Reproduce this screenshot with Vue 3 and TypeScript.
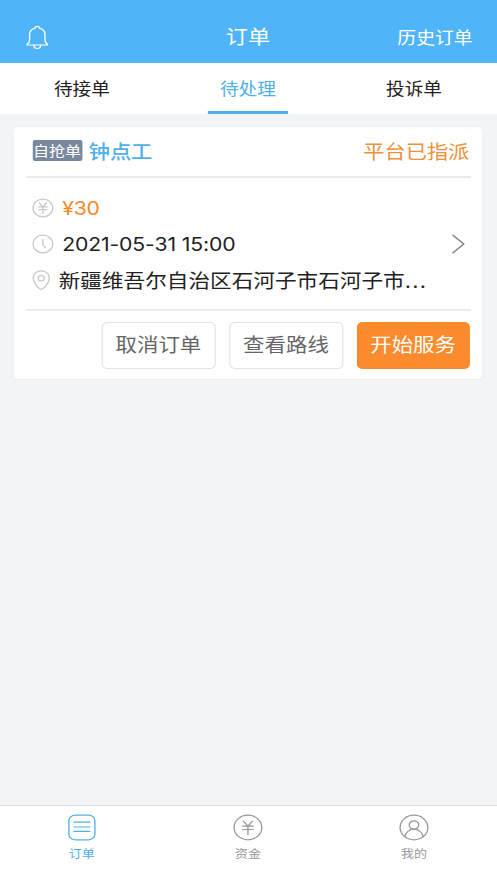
<script setup lang="ts">
import { ref } from 'vue'

interface Tab {
  key: string
  label: string
}

const tabs: Tab[] = [
  { key: 'waiting', label: '待接单' },
  { key: 'pending', label: '待处理' },
  { key: 'complaint', label: '投诉单' },
]
const navItems: Tab[] = [
  { key: 'orders', label: '订单' },
  { key: 'funds', label: '资金' },
  { key: 'mine', label: '我的' },
]
const activeTab = ref('pending')
const activeNav = ref('orders')

const order = {
  tag: '自抢单',
  service: '钟点工',
  status: '平台已指派',
  price: '¥30',
  time: '2021-05-31 15:00',
  address: '新疆维吾尔自治区石河子市石河子市',
}
</script>

<template>
  <div class="app">
    <header class="header">
      <svg class="bell" width="20" height="25" viewBox="0 0 20 25">
        <path d="M.9 19.200c1.600-1.200 2.300-2.300 2.300-4.200V9.600c0-3.400 2.100-5.700 5-6.500 0-1.100.7-1.800 1.800-1.800s1.800.7 1.800 1.800c2.900.8 5 3.100 5 6.500V15c0 1.900.7 3 2.300 4.200v.8H.9z" />
        <path d="M6.900 20.200c.2 2.100 1.400 3.300 3.100 3.300s2.900-1.200 3.100-3.300" />
      </svg>
      <h1 class="title">订单</h1>
      <span class="history">历史订单</span>
    </header>

    <nav class="tabs">
      <div
        v-for="t in tabs"
        :key="t.key"
        class="tab"
        :class="{ active: t.key === activeTab }"
        @click="activeTab = t.key"
      >
        <span class="tab-label">{{ t.label }}</span>
      </div>
    </nav>

    <main class="content">
      <section class="card">
        <div class="card-head">
          <span class="tag">{{ order.tag }}</span>
          <span class="service">{{ order.service }}</span>
          <span class="status">{{ order.status }}</span>
        </div>
        <div class="card-body">
          <div class="details">
            <div class="row price">
              <svg class="icon" width="20" height="20" viewBox="0 0 20 20">
                <circle cx="10" cy="10" r="8.800" />
                <path d="M6.800 5 10 8.900 13.200 5M6.400 8.900h7.200M6.400 11.600h7.200M10 8.900v6.500" />
              </svg>
              <span class="latin">{{ order.price }}</span>
            </div>
            <div class="row">
              <svg class="icon" width="20" height="20" viewBox="0 0 20 20">
                <circle cx="10" cy="10" r="8.800" />
                <path d="M10 5.300v5.700l2.200 2.800" />
              </svg>
              <span class="latin">{{ order.time }}</span>
            </div>
            <div class="row address">
              <svg class="icon pin" width="17" height="20" viewBox="0 0 17 20">
                <path d="M8.500 19.200C6.800 19.200 1.300 13.200 1.300 8.100a7.200 7.300 0 0 1 14.400 0C15.700 13.200 10.200 19.200 8.500 19.200z" />
                <circle cx="8.500" cy="8.300" r="2.700" />
              </svg>
              <span>{{ order.address }}<span class="dots">...</span></span>
            </div>
          </div>
          <svg class="chevron" width="12" height="20" viewBox="0 0 12 20">
            <path d="M1 1.200 10.600 10 1 18.800" />
          </svg>
        </div>
        <div class="actions">
          <button class="btn">取消订单</button>
          <button class="btn">查看路线</button>
          <button class="btn primary">开始服务</button>
        </div>
      </section>
    </main>

    <footer class="bottom">
      <div
        v-for="n in navItems"
        :key="n.key"
        class="nav"
        :class="{ active: n.key === activeNav }"
        @click="activeNav = n.key"
      >
        <svg width="27" height="27" viewBox="0 0 27 27">
          <template v-if="n.key === 'orders'">
            <rect x="2" y="1.200" width="23" height="24.600" rx="5.500" />
            <path d="M6.500 8.200h14M6.500 13h14M6.500 17.400h14" />
          </template>
          <template v-else-if="n.key === 'funds'">
            <circle cx="13.500" cy="13.500" r="12.300" />
            <path d="m9.500 7.200 4 5 4-5M8.800 12.200h9.400M8.800 15.500h9.400M13.500 12.200v8.300" />
          </template>
          <template v-else>
            <circle cx="13.500" cy="13.500" r="12.300" />
            <circle cx="13.500" cy="11" r="4.200" />
            <path d="M5.500 22.800c.5-4.500 3.700-7.600 8-7.600s7.500 3.100 8 7.600" />
          </template>
        </svg>
        <span>{{ n.label }}</span>
      </div>
    </footer>
  </div>
</template>

<style>
body {
  margin: 0;
  overflow: hidden;
}
</style>

<style scoped>
/* 440-unit wide layout, widened to fill the 497px viewport */
.app {
  display: flex;
  flex-direction: column;
  width: 440px;
  height: 883px;
  transform: scaleX(1.12955);
  transform-origin: 0 0;
  background: #f2f4f6;
  color: #222;
  font-family: Inter, "Noto Sans CJK SC", sans-serif;
}
svg {
  display: block;
  flex: none;
  fill: none;
  stroke: currentColor;
  stroke-width: 1.2;
  stroke-linecap: round;
  stroke-linejoin: round;
}
.header {
  display: grid;
  grid-template-columns: 1fr auto 1fr;
  align-items: center;
  box-sizing: border-box;
  height: 63px;
  padding: 11px 21.500px 0 22.500px;
  background: #50b5f8;
  color: #fff;
}
.title {
  margin: 0 1px 0 -1px;
  font-size: 19.6px;
  font-weight: 400;
  line-height: 28px;
}
.history {
  justify-self: end;
  font-size: 16.7px;
}
.tabs {
  display: flex;
  height: 51px;
  margin-left: -1px;
  background: #fff;
}
.tab {
  display: flex;
  flex: 1;
  justify-content: center;
}
.tab-label {
  box-sizing: border-box;
  width: 71px;
  height: 51px;
  border-bottom: 3px solid transparent;
  font-size: 16.5px;
  line-height: 53px;
  text-align: center;
}
.active .tab-label {
  border-color: #4eaeea;
  color: #50b0e8;
}
.content {
  flex: 1;
  padding: 12px 12px 0 11.500px;
}
.card {
  box-sizing: border-box;
  height: 254px;
  margin-left: -0.5px;
  padding: 0 10.500px;
  border: 1px solid #eceef0;
  border-radius: 5px;
  background: #fff;
}
.card-head {
  display: flex;
  align-items: center;
  box-sizing: border-box;
  height: 51px;
  padding: 0 1px 2px 6px;
  border-bottom: 2px solid #ebebeb;
}
.tag {
  width: 44px;
  height: 21px;
  border-radius: 2px;
  background: #7a889f;
  color: #fff;
  font-size: 14.2px;
  line-height: 21px;
  text-align: center;
}
.service {
  margin-left: 6px;
  color: #50b0e8;
  font-size: 18.8px;
  font-weight: 500;
}
.status {
  margin-left: auto;
  color: #ee9138;
  font-size: 18.8px;
}
.card-body {
  display: flex;
  align-items: center;
  justify-content: space-between;
  box-sizing: border-box;
  height: 133px;
  padding: 0 5px 0 5.500px;
  border-bottom: 2px solid #ebebeb;
}
.row {
  display: flex;
  align-items: center;
  gap: 7px;
  height: 36px;
  font-size: 18.8px;
  white-space: nowrap;
}
.row.price {
  color: #f6892c;
}
.row.address {
  font-size: 19.15px;
}
.latin {
  padding-top: 2px;
  letter-spacing: -0.12px;
}
.dots {
  letter-spacing: 1.2px;
}
.icon {
  color: #c9c9c9;
}
.chevron {
  color: #888;
  stroke-width: 1.5;
}
.actions {
  display: flex;
  justify-content: flex-end;
  gap: 11.500px;
  padding: 11px 0.5px 0 0;
}
.btn {
  box-sizing: border-box;
  width: 101.500px;
  height: 47px;
  padding: 1px 0 0;
  border: 1px solid #e2e2e2;
  border-radius: 5px;
  background: #fff;
  color: #666;
  font-family: inherit;
  font-size: 19px;
  line-height: 44px;
}
.btn.primary {
  width: 100.500px;
  border-color: #f6892c;
  background: #fb8b2d;
  color: #fff;
}
.bottom {
  display: flex;
  box-sizing: border-box;
  height: 78px;
  margin-left: -1px;
  border-top: 1px solid #e3e4e6;
  background: #fff;
}
.nav {
  display: flex;
  flex: 1;
  flex-direction: column;
  align-items: center;
  padding-top: 8px;
  color: #999;
  font-size: 11.6px;
  line-height: 17px;
}
.nav span {
  margin-top: 5px;
}
.nav.active {
  color: #50b0e8;
}
</style>
